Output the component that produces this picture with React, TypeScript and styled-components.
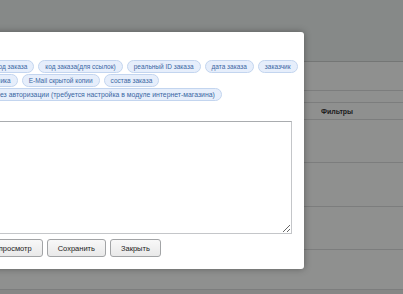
import styled, { createGlobalStyle } from "styled-components";

const GlobalStyle = createGlobalStyle`
  html, body {
    margin: 0;
    padding: 0;
  }
  body {
    width: 403px;
    height: 294px;
    overflow: hidden;
    font-family: "Liberation Sans", Arial, sans-serif;
  }
`;

const Page = styled.div`
  position: relative;
  width: 403px;
  height: 294px;
  overflow: hidden;
  background: #8f908f;
  display: flex;
  flex-direction: column;
`;

const Header = styled.div`
  height: 61px;
  flex: none;
  background: #868988;
  border-bottom: 1px solid #747675;
`;

const Row = styled.div<{ $h: number }>`
  height: ${p => p.$h}px;
  flex: none;
  display: grid;
  grid-template-columns: 317px 1fr;
  align-items: center;
  border-bottom: 1px solid #7c7d7d;
`;

const HeadCell = styled.div`
  grid-column: 2;
  padding-left: 4px;
  font-size: 7px;
  font-weight: bold;
  color: #1c1c1c;
`;

const Footer = styled.div`
  flex: 1;
  background: #868786;
`;

const Dialog = styled.div`
  position: absolute;
  top: 32px;
  left: -90px;
  width: 394px;
  height: 237px;
  box-sizing: border-box;
  padding: 28px 12px 0 12px;
  background: #fff;
  border-radius: 3px;
  box-shadow: 0 0 7px rgba(0, 0, 0, 0.35);
  display: flex;
  flex-direction: column;
`;

const ChipRow = styled.div`
  display: flex;
  gap: 4px;
  margin-bottom: 1px;
  padding-left: 3px;
  white-space: nowrap;
`;

const LinkRow = styled(ChipRow)`
  padding-left: 14px;
`;

const Chip = styled.span<{ $size?: number }>`
  height: 13px;
  box-sizing: border-box;
  padding: 0 6px;
  display: inline-flex;
  align-items: center;
  border: 1px solid #c3d5ef;
  border-radius: 7px;
  background: #e6eefb;
  color: #3a67a3;
  font-size: ${p => p.$size ?? 6.5}px;
`;

const Editor = styled.textarea`
  margin-top: 19px;
  width: 100%;
  height: 113px;
  box-sizing: border-box;
  border: 1px solid #c4c6c9;
  border-top-color: #a9acaf;
  background: #fff;
  font: 8px "Liberation Sans", Arial, sans-serif;
  padding: 4px;
  outline: none;
`;

const Buttons = styled.div`
  display: flex;
  gap: 4px;
  margin-top: 5px;
  white-space: nowrap;
`;

const Button = styled.button`
  height: 18px;
  padding: 0 10px;
  box-sizing: border-box;
  border: 1px solid #a2a4a6;
  border-radius: 3px;
  background: linear-gradient(#f8f8f8, #e9e9e9);
  color: #222;
  font: 7.5px "Liberation Sans", Arial, sans-serif;
  cursor: pointer;
`;

const rows: string[][] = [
  ["ID", "символьный код заказа", "код заказа(для ссылок)", "реальный ID заказа", "дата заказа", "заказчик"],
  ["ID", "E-Mail сотрудника", "E-Mail скрытой копии", "состав заказа"],
];

export default function App() {
  return (
    <>
      <GlobalStyle />
      <Page>
        <Header />
        <Row $h={28} />
        <Row $h={11} />
        <Row $h={16}>
          <HeadCell>Фильтры</HeadCell>
        </Row>
        <Row $h={42} />
        <Row $h={43} />
        <Row $h={42} />
        <Row $h={39} />
        <Footer />
        <Dialog>
          {rows.map((r, i) => (
            <ChipRow key={i}>
              {r.map(t => (
                <Chip key={t}>{t}</Chip>
              ))}
            </ChipRow>
          ))}
          <LinkRow>
            <Chip $size={6.87}>
              ссылка на заказ без авторизации (требуется настройка в модуле интернет-магазина)
            </Chip>
          </LinkRow>
          <Editor />
          <Buttons>
            <Button>Предварительный просмотр</Button>
            <Button>Сохранить</Button>
            <Button>Закрыть</Button>
          </Buttons>
        </Dialog>
      </Page>
    </>
  );
}
